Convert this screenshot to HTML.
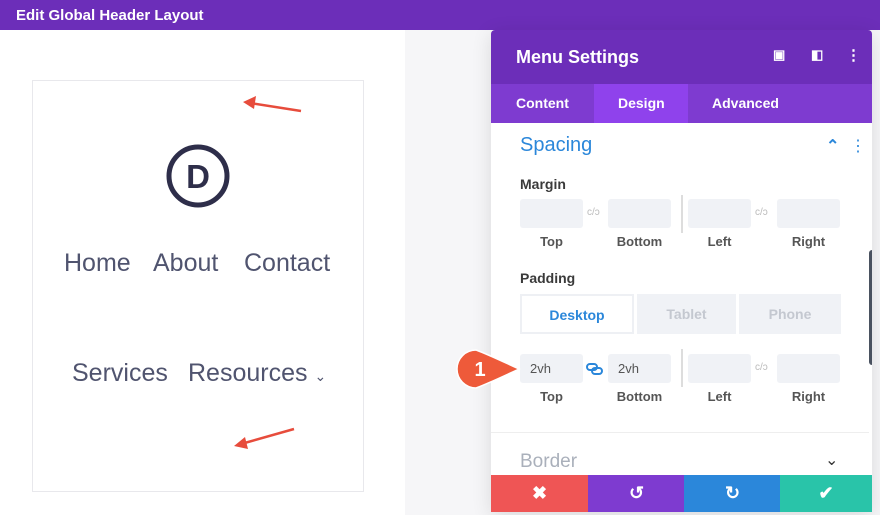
<!DOCTYPE html>
<html><head><style>
*{box-sizing:border-box;margin:0;padding:0}
body{width:880px;height:515px;overflow:hidden;background:#fff;font-family:"Liberation Sans",sans-serif;position:relative}
.top{position:absolute;left:0;top:0;width:880px;height:30px;background:#6c2eb9;color:#fff;font-size:15px;font-weight:bold;padding:7px 0 0 16px}
.right{position:absolute;left:405px;top:30px;width:475px;height:485px;background:#f6f6f8}
.card{position:absolute;left:32px;top:80px;width:332px;height:412px;border:1px solid #e8e8ec;background:#fff}
.nav{position:absolute;color:#50546f;font-size:25px}
.panel{position:absolute;left:491px;top:30px;width:381px;height:482px;background:#fff;border-radius:4px 4px 0 0;box-shadow:0 4px 20px rgba(0,0,0,.12);overflow:hidden}
.ph{height:54px;background:#6c2eb9;color:#fff;font-size:18px;font-weight:bold;padding:17px 0 0 25px;position:relative}
.tabs{height:39px;background:#7e3bd0;position:relative;color:#fff;font-size:14px;font-weight:bold}
.tabs span{position:absolute;top:11px}
.lbl{position:absolute;font-size:14px;font-weight:bold;color:#3a3a3a}
.inp{position:absolute;width:63px;height:29px;background:#f0f2f6;border-radius:3px;font-size:13px;color:#555;padding:7px 0 0 10px}
.sm{position:absolute;font-size:13px;color:#555;text-align:center;width:63px;font-weight:bold}
.lk{position:absolute;font-size:10px;color:#bbb}
.btn{position:absolute;top:475px;height:37px;width:97px;color:#fff;font-size:18px;font-weight:bold;text-align:center;padding-top:8px}
</style></head><body>
<div class="top">Edit Global Header Layout</div>
<div class="right"></div>
<div class="card"></div>
<svg style="position:absolute;left:0;top:0" width="420" height="515">
<line x1="301" y1="111" x2="250" y2="103" stroke="#e74c3c" stroke-width="2.5"/>
<polygon points="243,102 256,96 254,109" fill="#e74c3c"/>
<line x1="294" y1="429" x2="241" y2="444" stroke="#e74c3c" stroke-width="2.5"/>
<polygon points="234,446 245,437 248,449" fill="#e74c3c"/>
<circle cx="198" cy="176" r="29" fill="none" stroke="#2e2e4a" stroke-width="5"/>
<text x="198" y="188" text-anchor="middle" font-family="Liberation Sans" font-weight="bold" font-size="33" fill="#2e2e4a">D</text>
</svg>
<div class="nav" style="left:64px;top:249px">Home</div>
<div class="nav" style="left:153px;top:249px">About</div>
<div class="nav" style="left:244px;top:249px">Contact</div>
<div class="nav" style="left:72px;top:359px">Services</div>
<div class="nav" style="left:188px;top:359px">Resources <span style="font-size:14px">⌄</span></div>
<div class="panel">
<div class="ph">Menu Settings
<span style="position:absolute;left:282px;top:17px;font-size:13px">▣</span>
<span style="position:absolute;left:320px;top:17px;font-size:13px">◧</span>
<span style="position:absolute;left:355px;top:16px;font-size:15px">⋮</span></div>
<div class="tabs"><span style="left:25px">Content</span>
<div style="position:absolute;left:103px;top:0;width:94px;height:39px;background:#8f42ec"></div>
<span style="left:127px">Design</span><span style="left:221px">Advanced</span></div>
<div style="position:absolute;left:29px;top:104px;font-size:20px;color:#2b87da">Spacing</div>
<div style="position:absolute;left:335px;top:106px;font-size:16px;color:#2b87da;font-weight:bold">⌃</div>
<div style="position:absolute;left:359px;top:106px;font-size:16px;color:#2b87da">⋮</div>
<div class="lbl" style="left:29px;top:146px">Margin</div>
<div class="inp" style="left:29px;top:169px"></div><div class="inp" style="left:117px;top:169px"></div>
<div class="inp" style="left:197px;top:169px"></div><div class="inp" style="left:286px;top:169px"></div>
<div style="position:absolute;left:190px;top:165px;width:2px;height:38px;background:#ddd"></div>
<div class="lk" style="left:96px;top:177px">c/ɔ</div><div class="lk" style="left:264px;top:177px">c/ɔ</div>
<div class="sm" style="left:29px;top:204px">Top</div><div class="sm" style="left:117px;top:204px">Bottom</div>
<div class="sm" style="left:197px;top:204px">Left</div><div class="sm" style="left:286px;top:204px">Right</div>
<div class="lbl" style="left:29px;top:240px">Padding</div>
<div style="position:absolute;left:146px;top:264px;width:99px;height:40px;background:#f0f2f6"></div>
<div style="position:absolute;left:248px;top:264px;width:102px;height:40px;background:#f0f2f6"></div>
<div style="position:absolute;left:29px;top:264px;width:114px;height:40px;background:#fff;border:2px solid #eef0f4;color:#2b87da;font-size:14px;font-weight:bold;text-align:center;padding-top:11px">Desktop</div>
<div style="position:absolute;left:146px;top:276px;width:99px;text-align:center;color:#c4c8d0;font-size:14px;font-weight:bold">Tablet</div>
<div style="position:absolute;left:248px;top:276px;width:102px;text-align:center;color:#c4c8d0;font-size:14px;font-weight:bold">Phone</div>
<div class="inp" style="left:29px;top:324px">2vh</div><div class="inp" style="left:117px;top:324px">2vh</div>
<div class="inp" style="left:197px;top:324px"></div><div class="inp" style="left:286px;top:324px"></div>
<div style="position:absolute;left:190px;top:319px;width:2px;height:38px;background:#ddd"></div>
<svg style="position:absolute;left:95px;top:333px" width="18" height="12"><rect x="1" y="1" width="10" height="6" rx="3" fill="none" stroke="#2b87da" stroke-width="2"/><rect x="6" y="5" width="10" height="6" rx="3" fill="none" stroke="#2b87da" stroke-width="2"/></svg>
<div class="lk" style="left:264px;top:332px">c/ɔ</div>
<div class="sm" style="left:29px;top:359px">Top</div><div class="sm" style="left:117px;top:359px">Bottom</div>
<div class="sm" style="left:197px;top:359px">Left</div><div class="sm" style="left:286px;top:359px">Right</div>
<div style="position:absolute;left:0;top:402px;width:378px;height:1px;background:#eee"></div>
<div style="position:absolute;left:29px;top:421px;font-size:19px;color:#aab0bb">Border</div>
<div style="position:absolute;left:334px;top:420px;font-size:16px;color:#333">⌄</div>
<div style="position:absolute;left:378px;top:220px;width:6px;height:115px;background:#4a5260;border-radius:3px"></div>
</div>
<div class="btn" style="left:491px;background:#ef5555">✖</div>
<div class="btn" style="left:588px;background:#7e3bd0">↺</div>
<div class="btn" style="left:684px;background:#2b87da">↻</div>
<div class="btn" style="left:780px;width:92px;background:#29c4a9">✔</div>
<svg style="position:absolute;left:455px;top:348px" width="68" height="42">
<path d="M21 2 A19 19 0 1 0 21 40 Q32 36 64 21 Q32 6 21 2Z" fill="#ee5a3a" stroke="#fff" stroke-width="1.5"/>
<text x="25" y="28" text-anchor="middle" fill="#fff" font-family="Liberation Sans" font-weight="bold" font-size="20">1</text>
</svg>
</body></html>
